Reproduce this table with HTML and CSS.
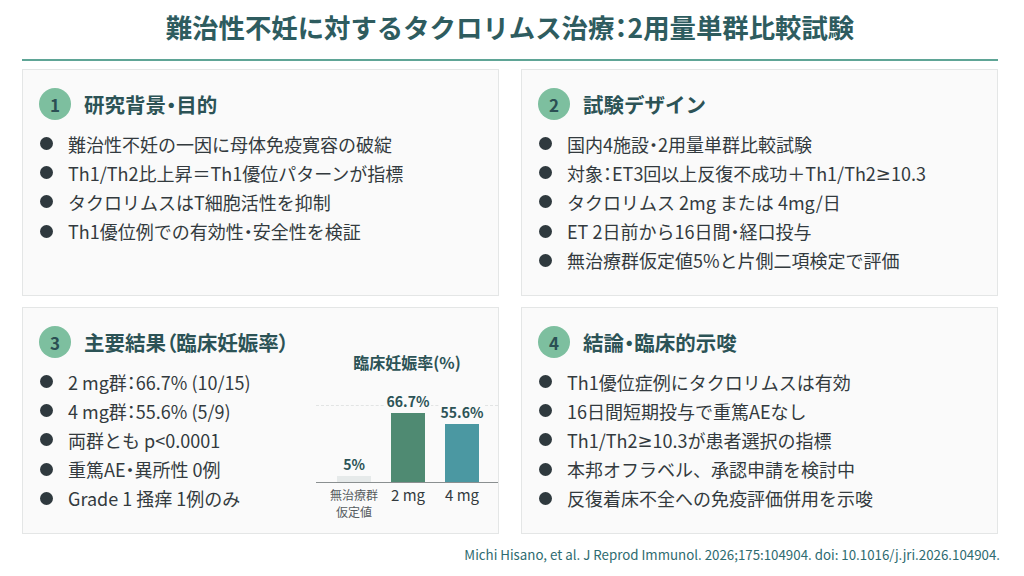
FILE: index.html
```html
<!DOCTYPE html>
<html lang="ja">
<head>
<meta charset="utf-8">
<link rel="stylesheet" href="styles.css">
</head>
<body>
<header class="header">
  <h1 class="title">難治性不妊に対するタクロリムス治療<span class="nar">：</span>2用量単群比較試験</h1>
</header>
<main class="grid">
  <section class="card">
    <div class="card-head"><span class="badge">1</span><h2>研究背景<span class="nar">・</span>目的</h2></div>
    <ul class="list">
      <li>難治性不妊の一因に母体免疫寛容の破綻</li>
      <li>Th1/Th2比上昇＝Th1優位パターンが指標</li>
      <li>タクロリムスはT細胞活性を抑制</li>
      <li>Th1優位例での有効性<span class="nar">・</span>安全性を検証</li>
    </ul>
  </section>
  <section class="card">
    <div class="card-head"><span class="badge">2</span><h2>試験デザイン</h2></div>
    <ul class="list">
      <li>国内4施設<span class="nar">・</span>2用量単群比較試験</li>
      <li>対象<span class="nar">：</span>ET3回以上反復不成功＋Th1/Th2<span class="lat">≥</span>10.3</li>
      <li>タクロリムス 2mg または 4mg/日</li>
      <li>ET 2日前から16日間<span class="nar">・</span>経口投与</li>
      <li>無治療群仮定値5%と片側二項検定で評価</li>
    </ul>
  </section>
  <section class="card card-result">
    <div class="result-main">
      <div class="card-head"><span class="badge">3</span><h2>主要結果<span class="nar">（</span>臨床妊娠率<span class="nar">）</span></h2></div>
      <ul class="list">
        <li>2 mg群<span class="nar">：</span>66.7% (10/15)</li>
        <li>4 mg群<span class="nar">：</span>55.6% (5/9)</li>
        <li>両群とも p&lt;0.0001</li>
        <li>重篤AE<span class="nar">・</span>異所性 0例</li>
        <li>Grade 1 掻痒 1例のみ</li>
      </ul>
    </div>
    <div class="chart">
      <div class="chart-title">臨床妊娠率(%)</div>
      <div class="plot">
        <div class="gridline"></div>
        <div class="col"><span class="val">5%</span><div class="bar bar-base" style="height:6px"></div></div>
        <div class="col"><span class="val">66.7%</span><div class="bar bar-2" style="height:69px"></div></div>
        <div class="col"><span class="val">55.6%</span><div class="bar bar-4" style="height:58px"></div></div>
      </div>
      <div class="xlabels">
        <span class="xl xl-small">無治療群<br>仮定値</span>
        <span class="xl">2 mg</span>
        <span class="xl">4 mg</span>
      </div>
    </div>
  </section>
  <section class="card">
    <div class="card-head"><span class="badge">4</span><h2>結論<span class="nar">・</span>臨床的示唆</h2></div>
    <ul class="list">
      <li>Th1優位症例にタクロリムスは有効</li>
      <li>16日間短期投与で重篤AEなし</li>
      <li>Th1/Th2<span class="lat">≥</span>10.3が患者選択の指標</li>
      <li>本邦オフラベル、承認申請を検討中</li>
      <li>反復着床不全への免疫評価併用を示唆</li>
    </ul>
  </section>
</main>
<footer class="cite">Michi Hisano, et al. J Reprod Immunol. 2026;175:104904. doi: 10.1016/j.jri.2026.104904.</footer>
</body>
</html>
```
FILE: styles.css
```css
* { box-sizing: border-box; }
html, body { margin: 0; padding: 0; }
body {
  width: 1024px;
  height: 576px;
  background: #ffffff;
  font-family: "Noto Sans CJK JP", "Noto Sans", sans-serif;
  color: #333a3e;
  overflow: hidden;
}
.nar { font-feature-settings: "palt"; }
.lat { font-family: "Noto Sans", "DejaVu Sans", sans-serif; }
.header {
  margin: 0 26px 0 22px;
  height: 61px;
  border-bottom: 2px solid #5fa596;
  display: flex;
  align-items: center;
  justify-content: center;
  padding-bottom: 6px;
}
.title {
  margin: 0;
  font-size: 26.4px;
  font-weight: 700;
  color: #2e5c5f;
  line-height: 1.2;
}
.grid {
  display: grid;
  grid-template-columns: 477px 477px;
  grid-template-rows: 227px 227px;
  column-gap: 22px;
  row-gap: 11px;
  margin: 8px 0 0 22px;
}
.card {
  background: #fafafa;
  border: 1px solid #e4e6e6;
  padding: 18px 16px;
}
.card-head {
  display: flex;
  align-items: center;
  gap: 13px;
  height: 32px;
}
.badge {
  width: 32px;
  height: 32px;
  border-radius: 50%;
  background: #7dbf9f;
  color: #2b4f53;
  font-size: 17px;
  font-weight: 700;
  display: flex;
  align-items: center;
  justify-content: center;
  flex: none;
}
.card-head h2 {
  margin: 0;
  font-size: 20.5px;
  font-weight: 700;
  color: #2c5356;
}
.list {
  list-style: none;
  margin: 9px 0 0;
  padding: 0;
}
.list li {
  display: flex;
  align-items: center;
  height: 29.2px;
  font-size: 18px;
  color: #333a3e;
  white-space: nowrap;
}
.list li::before {
  content: "";
  width: 13px;
  height: 13px;
  border-radius: 50%;
  background: #2f393e;
  margin: 0 15px 0 1px;
  flex: none;
}
.card-result {
  display: flex;
  padding-right: 0;
}
.result-main { flex: 1; }
.chart {
  width: 182px;
  display: flex;
  flex-direction: column;
  align-items: stretch;
  padding-top: 26px;
}
.chart > * { flex: none; }
.chart-title {
  text-align: center;
  font-size: 16px;
  font-weight: 700;
  color: #2c5356;
  height: 20px;
  line-height: 20px;
}
.plot {
  position: relative;
  height: 105px;
  border-bottom: 1.5px solid #8a8f90;
  display: flex;
  align-items: flex-end;
  gap: 20px;
  padding: 0 21px;
  margin-top: 6px;
}
.gridline {
  position: absolute;
  left: 0;
  right: 0;
  bottom: 76px;
  border-top: 1px dashed #e2e4e4;
}
.col {
  width: 34px;
  display: flex;
  flex-direction: column;
  align-items: center;
  position: relative;
}
.val {
  font-size: 14px;
  font-weight: 700;
  color: #2c5356;
  line-height: 16px;
  margin-bottom: 4px;
  background: #fafafa;
  padding: 0 2px;
}
.bar { width: 34px; }
.bar-base { background: #e6eaea; }
.bar-2 { background: #4f8a72; }
.bar-4 { background: #4b98a2; }
.xlabels {
  display: flex;
  gap: 20px;
  padding: 0 21px;
  margin-top: 3px;
}
.xl {
  width: 34px;
  display: flex;
  justify-content: center;
  text-align: center;
  white-space: nowrap;
  font-size: 15px;
  color: #333a3e;
  line-height: 18px;
}
.xl-small {
  font-size: 12px;
  line-height: 17px;
  color: #555b5e;
}
.cite {
  margin: 11px 24px 0 0;
  text-align: right;
  font-size: 13.3px;
  color: #2e6b70;
}
```
